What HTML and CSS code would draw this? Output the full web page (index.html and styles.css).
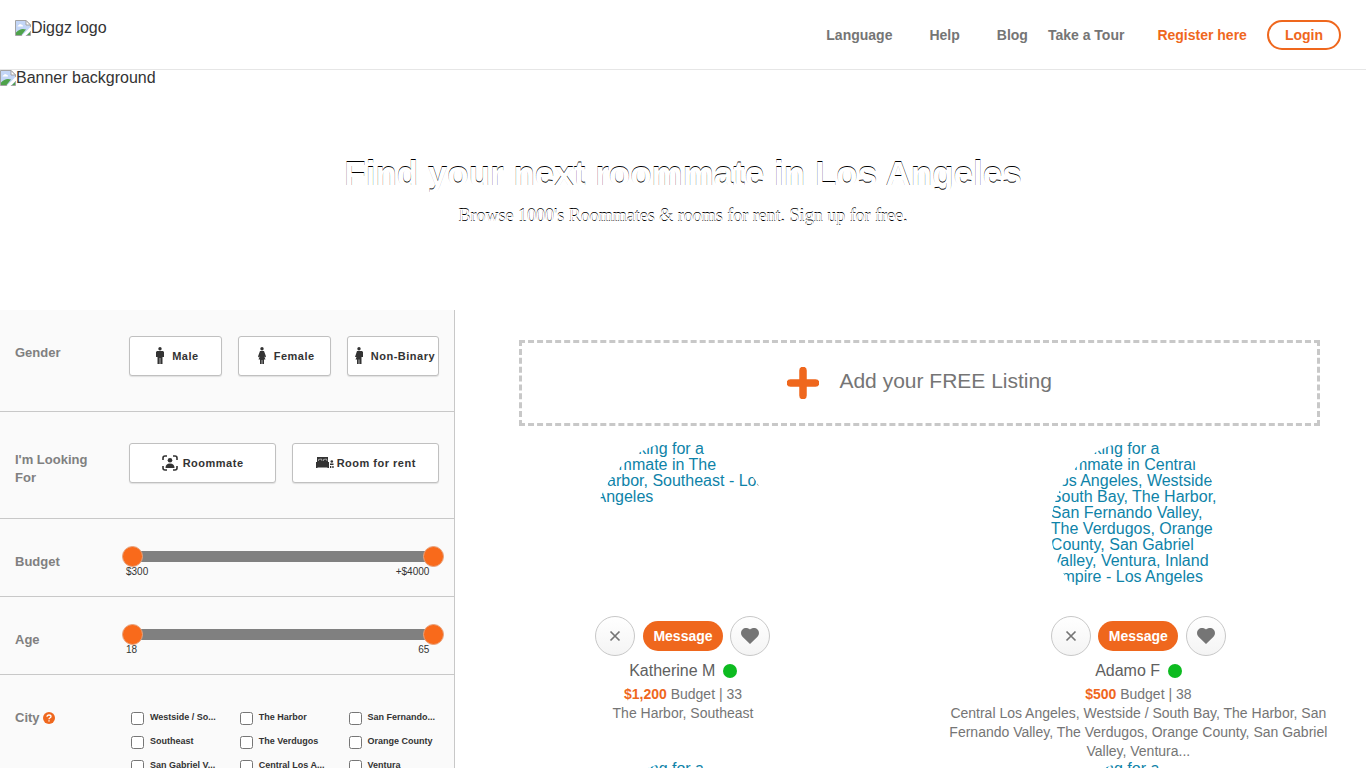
FILE: index.html
```html
<!DOCTYPE html>
<html lang="en">
<head>
<meta charset="utf-8">
<meta name="viewport" content="width=device-width, initial-scale=1">
<title>Find your next roommate in Los Angeles</title>
<link rel="stylesheet" href="styles.css">
</head>
<body>
<svg class="defs" aria-hidden="true">
  <symbol id="missing" viewBox="0 0 16 16">
    <path d="M.5 .5H11L15.500 5V15.500H.5Z" fill="#c3d6f7" stroke="#a3a3a3"/>
    <path d="M2.500 6.500Q2.500 5 4 5Q4.700 3.300 6.200 4.600Q8 4.600 8 6.500Z" fill="#fff"/>
    <path d="M1 15V12.500Q5.500 7.500 11 9.500L6.500 15Z" fill="#4ea24a"/>
    <path d="M16 6.500L6.500 16H10.500L16 10.500Z" fill="#fff"/>
    <path d="M12 15H15V12Z" fill="#4ea24a"/>
    <path d="M11 .5V5H15.500Z" fill="#fff" stroke="#a3a3a3"/>
  </symbol>
  <symbol id="cross" viewBox="0 0 12 12"><path d="M1.500 1.500L10.500 10.500M10.500 1.500L1.500 10.500" stroke="#757575" stroke-width="1.700" fill="none"/></symbol>
  <symbol id="heart" viewBox="0 0 18 16"><path d="M9 16L1.500 8.800C-.6 6.600-.3 3.200 1.500 1.500C3.500-.5 7-.3 9 1.600C11-.3 14.500-.5 16.500 1.500C18.300 3.200 18.600 6.600 16.500 8.800Z" fill="#757575"/></symbol>
</svg>

<header class="topbar">
  <a class="logo" href="#"><svg class="missing"><use href="#missing"/></svg>Diggz logo</a>
  <nav class="nav">
    <a class="wide" href="#">Language</a>
    <a class="wide" href="#">Help</a>
    <a href="#">Blog</a>
    <a class="wide" href="#">Take a Tour</a>
    <a class="accent" href="#">Register here</a>
    <a class="login" href="#">Login</a>
  </nav>
</header>

<section class="banner">
  <div class="banner-image"><svg class="missing"><use href="#missing"/></svg>Banner background</div>
  <h1>Find your next roommate in Los Angeles</h1>
  <p>Browse 1000's Roommates &amp; rooms for rent. Sign up for free.</p>
</section>

<div class="layout">
  <form class="filters">
    <section class="filter">
      <h2>Gender</h2>
      <div class="choices three">
        <button type="button"><svg class="person" viewBox="0 0 8 17"><circle cx="4" cy="1.700" r="1.700"/><path d="M1 4H7L8 5V10H6.500V17H4.300V11H3.700V17H1.500V10H0V5Z"/></svg>Male</button>
        <button type="button"><svg class="person" viewBox="0 0 8 17"><circle cx="4" cy="1.700" r="1.700"/><path d="M2 4H6L8 9.500L7 10.500L6 9L7.500 12.500H6V17H4.300V13H3.700V17H2V12.500H.5L2 9L1 10.500L0 9.500Z"/></svg>Female</button>
        <button type="button"><svg class="person" viewBox="0 0 8 17"><circle cx="4" cy="1.700" r="1.700"/><path d="M2 4H7L8 5V10H6.500V17H4.300V12.500H3.700V17H2V12.500H.5L1.500 10H0Z"/></svg>Non-Binary</button>
      </div>
    </section>
    <section class="filter taller">
      <h2>I'm Looking For</h2>
      <div class="choices two">
        <button type="button"><svg class="frame" viewBox="0 0 16 16"><path d="M1 5V3Q1 1 3 1H5M11 1H13Q15 1 15 3V5M15 11V13Q15 15 13 15H11M5 15H3Q1 15 1 13V11" fill="none" stroke="#333" stroke-width="1.600"/><circle cx="8" cy="5.300" r="2.300"/><path d="M3.500 13Q3.500 8.500 8 8.500Q12.500 8.500 12.500 13Z"/></svg>Roommate</button>
        <button type="button"><svg class="bed" viewBox="0 0 18 11"><path d="M1 0H12V5H13V11H11.500V10.500H1.500V11H0V5H1Z"/><path d="M2.500 4V2.500L5.500 2L6 4M7.500 4V2.500L10.500 2L11 4" fill="none" stroke="#ddd" stroke-width=".6"/><circle cx="15.800" cy="4.500" r="1.300"/><path d="M14 6.500H17.500V8H14ZM14 9H15.300V11H14ZM16.300 9H17.600V11H16.300Z"/></svg>Room for rent</button>
      </div>
    </section>
    <section class="filter short">
      <h2>Budget</h2>
      <div class="range">
        <input class="low" type="range" min="300" max="4000" value="300" aria-label="Minimum budget">
        <input class="high" type="range" min="300" max="4000" value="4000" aria-label="Maximum budget">
        <output class="min">$300</output><output class="max">+$4000</output>
      </div>
    </section>
    <section class="filter short">
      <h2>Age</h2>
      <div class="range">
        <input class="low" type="range" min="18" max="65" value="18" aria-label="Minimum age">
        <input class="high" type="range" min="18" max="65" value="65" aria-label="Maximum age">
        <output class="min">18</output><output class="max">65</output>
      </div>
    </section>
    <section class="filter">
      <h2>City <svg class="help" viewBox="0 0 12 12"><circle cx="6" cy="6" r="6" fill="#ef671d"/><path d="M4 4.700Q4 3 6 3Q8 3 8 4.600Q8 5.500 6.800 6Q6 6.400 6 7.200M6 8.300V9.500" fill="none" stroke="#fff" stroke-width="1.300"/></svg></h2>
      <div class="cities">
        <label><input type="checkbox"><span>Westside / So...</span></label>
        <label><input type="checkbox"><span>The Harbor</span></label>
        <label><input type="checkbox"><span>San Fernando...</span></label>
        <label><input type="checkbox"><span>Southeast</span></label>
        <label><input type="checkbox"><span>The Verdugos</span></label>
        <label><input type="checkbox"><span>Orange County</span></label>
        <label><input type="checkbox"><span>San Gabriel V...</span></label>
        <label><input type="checkbox"><span>Central Los A...</span></label>
        <label><input type="checkbox"><span>Ventura</span></label>
      </div>
    </section>
  </form>

  <main class="results">
    <a class="add" href="#">
      <svg viewBox="0 0 32 32"><path d="M16 3.500V28.500M3.500 16H28.500" stroke="#ef671d" stroke-width="7.500" stroke-linecap="round"/></svg>
      <span>Add your FREE Listing</span>
    </a>
    <div class="cards">
      <article class="card">
        <a class="photo" href="#"><svg class="missing"><use href="#missing"/></svg>Looking for a roommate in The Harbor, Southeast - Los Angeles</a>
        <div class="actions">
          <button class="round" type="button" aria-label="Dismiss"><svg class="cross"><use href="#cross"/></svg></button>
          <button class="message" type="button">Message</button>
          <button class="round" type="button" aria-label="Like"><svg class="heart"><use href="#heart"/></svg></button>
        </div>
        <h3>Katherine M <i class="online"></i></h3>
        <p><b>$1,200</b> Budget | 33</p>
        <p>The Harbor, Southeast</p>
      </article>
      <article class="card">
        <a class="photo" href="#"><svg class="missing"><use href="#missing"/></svg>Looking for a roommate in Central Los Angeles, Westside / South Bay, The Harbor, San Fernando Valley, The Verdugos, Orange County, San Gabriel Valley, Ventura, Inland Empire - Los Angeles</a>
        <div class="actions">
          <button class="round" type="button" aria-label="Dismiss"><svg class="cross"><use href="#cross"/></svg></button>
          <button class="message" type="button">Message</button>
          <button class="round" type="button" aria-label="Like"><svg class="heart"><use href="#heart"/></svg></button>
        </div>
        <h3>Adamo F <i class="online"></i></h3>
        <p><b>$500</b> Budget | 38</p>
        <p>Central Los Angeles, Westside / South Bay, The Harbor, San Fernando Valley, The Verdugos, Orange County, San Gabriel Valley, Ventura...</p>
      </article>
      <article class="card"><a class="photo" href="#"><svg class="missing"><use href="#missing"/></svg>Looking for a</a></article>
      <article class="card"><a class="photo" href="#"><svg class="missing"><use href="#missing"/></svg>Looking for a</a></article>
    </div>
  </main>
</div>
</body>
</html>
```
FILE: styles.css
```css
* { box-sizing: border-box; }
body {
  margin: 0;
  background: #fff;
  color: #333;
  font: 16px/16px "Liberation Sans", Arial, sans-serif;
}
a { text-decoration: none; color: inherit; }
h1, h2, h3, p { margin: 0; }
button { font-family: inherit; cursor: pointer; }
.defs { display: none; }
.missing { width: 16px; height: 16px; vertical-align: bottom; }

.topbar {
  display: flex;
  align-items: flex-start;
  justify-content: space-between;
  min-height: 70px;
  padding: 20px 25px 19px 15px;
  border-bottom: 1px solid #e6e6e6;
}
.nav {
  display: flex;
  align-items: center;
  gap: 20px;
  font-size: 14px;
  font-weight: bold;
  color: #757575;
}
.nav .wide { padding-right: 17px; }
.nav .wide + .accent { margin-left: -4px; }
.nav .accent, .nav .login { color: #ef671d; }
.nav .login {
  padding: 5px 16px;
  border: 2px solid #ef671d;
  border-radius: 15px;
}

.banner { min-height: 240px; text-align: center; color: #fff; }
.banner-image { text-align: left; color: #333; }
.banner h1 {
  padding-top: 66px;
  font-size: 35px;
  line-height: 44px;
  text-shadow: 0 -1px 0 #000;
}
.banner p {
  padding-top: 10px;
  font: 18px/20px "Liberation Serif", "Times New Roman", serif;
  text-shadow: 0 -1px 0 #000;
}

.layout { display: grid; grid-template-columns: 1fr 2fr; }
.filters { background: #fafafa; border-right: 1px solid #c8c8c8; }
.filter {
  display: grid;
  grid-template-columns: 84px 1fr;
  gap: 30px;
  padding: 26px 15px 35px;
  border-bottom: 1px solid #c8c8c8;
}
.filter:last-child { border-bottom: 0; }
.filter.taller { padding-top: 31px; padding-bottom: 31px; }
.filter.short { padding-bottom: 19px; }
.filter h2 {
  padding-top: 8px;
  font-size: 13px;
  line-height: 18px;
  color: #808080;
}
.help { width: 12px; height: 12px; vertical-align: -2px; }
.choices { display: grid; gap: 16px; }
.three { grid-template-columns: repeat(3, minmax(0, 1fr)); }
.two { grid-template-columns: repeat(2, minmax(0, 1fr)); }
.choices button {
  display: flex;
  align-items: center;
  justify-content: center;
  height: 40px;
  padding: 0 0 1px;
  border: 1px solid #c0c0c0;
  border-radius: 3px;
  background: #fff;
  color: #333;
  font-size: 11px;
  font-weight: bold;
  letter-spacing: .5px;
  white-space: nowrap;
  box-shadow: 0 1px 1px #e0e0e0;
}
.three button { padding-left: 4px; }
.choices svg { flex: none; fill: #333; }
.person { width: 8px; height: 17px; margin-right: 8px; }
.frame { width: 16px; height: 16px; margin-right: 5px; }
.bed { width: 18px; height: 11px; margin-right: 3px; }

.range {
  display: grid;
  grid-template-columns: 1fr 1fr;
  margin: 0 -5px 0 -7px;
}
.range input {
  grid-row: 1;
  grid-column: 1 / 3;
  appearance: none;
  width: 100%;
  height: 22px;
  margin: 0;
  background: none;
}
.range .low { background: linear-gradient(#808080, #808080) center / calc(100% - 20px) 11px no-repeat; }
.range .high { pointer-events: none; }
.range input::-webkit-slider-thumb {
  appearance: none;
  width: 21px;
  height: 21px;
  border: 1px solid #e8a27c;
  border-radius: 50%;
  background: #f96a1b;
  pointer-events: auto;
}
.range output { font-size: 10px; line-height: 10px; }
.range .min { padding-left: 4px; }
.range .max { padding-right: 15px; text-align: right; }

.cities {
  display: grid;
  grid-template-columns: repeat(3, minmax(0, 1fr));
  column-gap: 16px;
  padding-top: 5px;
}
.cities label {
  display: flex;
  align-items: center;
  gap: 6px;
  height: 24px;
  padding-left: 2px;
  font-size: 9px;
  font-weight: bold;
  white-space: nowrap;
}
.cities input { flex: none; width: 13px; height: 13px; margin: 0; }
.cities span { padding-bottom: 2px; }

.add {
  display: flex;
  align-items: center;
  justify-content: center;
  gap: 20px;
  margin: 30px 46px 15px 64px;
  min-height: 86px;
  border: 3px dashed #c8c8c8;
  color: #757575;
  font-size: 21px;
  line-height: 24px;
}
.add svg { width: 32px; height: 32px; }
.add span { padding-bottom: 4px; }
.cards { display: grid; grid-template-columns: 1fr 1fr; }
.card { padding: 0 30px; text-align: center; color: #757575; }
.photo {
  display: block;
  width: 175px;
  height: 175px;
  margin: 0 auto;
  border-radius: 50%;
  overflow: hidden;
  text-align: left;
  color: #0e83a8;
}
.actions {
  display: flex;
  align-items: center;
  justify-content: space-between;
  width: 175px;
  margin: 0 auto;
}
.round {
  display: grid;
  place-items: center;
  width: 40px;
  height: 40px;
  padding: 0;
  border: 1px solid #c8c8c8;
  border-radius: 50%;
  background: linear-gradient(#fff, #f4f4f4);
}
.cross { width: 12px; height: 12px; }
.heart { width: 18px; height: 16px; }
.message {
  width: 80px;
  height: 30px;
  padding: 0;
  border: 0;
  border-radius: 15px;
  background: #ef671d;
  color: #fff;
  font-size: 14px;
  font-weight: bold;
}
.card h3 {
  padding: 5px 0 4px;
  font-size: 16px;
  font-weight: normal;
  line-height: 20px;
  color: #606060;
}
.online {
  display: inline-block;
  width: 14px;
  height: 14px;
  margin-left: 3px;
  border-radius: 50%;
  background: #0dbb20;
  vertical-align: -2px;
}
.card p { font-size: 14px; line-height: 19px; }
.card b { color: #ef671d; }
```
